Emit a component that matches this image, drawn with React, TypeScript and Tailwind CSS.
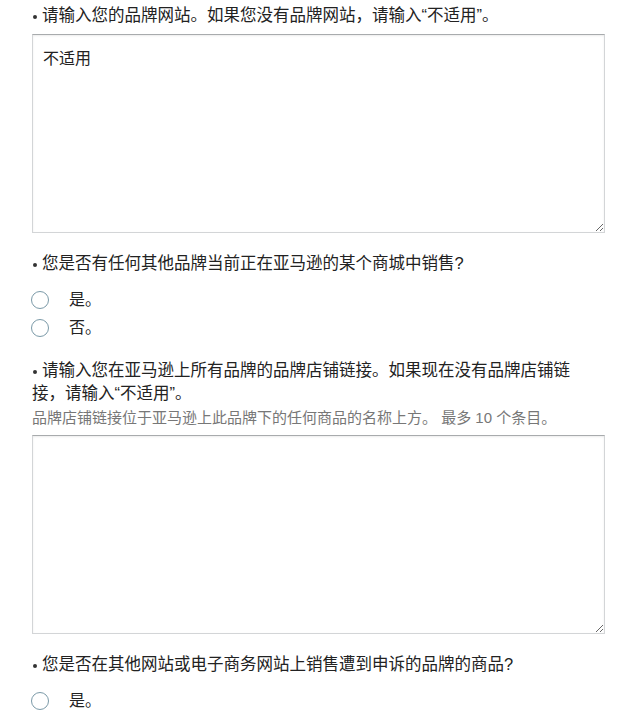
import React, { useState } from "react";

const font = { fontFamily: '"Liberation Sans", "Noto Sans CJK SC", sans-serif' };

const Question = ({ children }: { children: React.ReactNode }) => (
  <p className="text-[16.5px] leading-[23px] text-[#222] max-w-[550px]">
    <span className="inline-block w-[4px] h-[4px] rounded-full bg-[#333] align-middle ml-[1px] mr-[5px]" />
    {children}
  </p>
);

const Radio = ({ label, name }: { label: string; name: string }) => {
  return (
    <label className="flex items-center h-[28px] cursor-pointer">
      <span className="w-[18px] h-[18px] rounded-full border-[1.5px] border-[#7b9aa8] bg-white" />
      <span className="ml-[20px] text-[16px] text-[#222]">{label}</span>
      <input type="radio" name={name} className="hidden" />
    </label>
  );
};

const Area = ({ value }: { value?: string }) => {
  const [text, setText] = useState(value ?? "");
  return (
    <textarea
      value={text}
      onChange={(e) => setText(e.target.value)}
      className="block w-[573px] h-[199px] border border-[#d3d5d7] border-t-[#a8abad] shadow-[inset_0_1px_2px_rgba(0,0,0,0.08)] px-[10px] py-[12px] text-[16px] text-[#222] outline-none"
      style={font}
    />
  );
};

export default function App() {
  return (
    <div className="bg-white min-h-[710px] pl-[32px] pt-[4px]" style={font}>
      <Question>请输入您的品牌网站。如果您没有品牌网站，请输入“不适用”。</Question>
      <div className="mt-[7px]">
        <Area value="不适用" />
      </div>

      <div className="mt-[19px]">
        <Question>您是否有任何其他品牌当前正在亚马逊的某个商城中销售?</Question>
      </div>
      <div className="mt-[11px] -ml-[1px]">
        <Radio label="是。" name="q2" />
        <Radio label="否。" name="q2" />
      </div>

      <div className="mt-[17px]">
        <Question>请输入您在亚马逊上所有品牌的品牌店铺链接。如果现在没有品牌店铺链接，请输入“不适用”。</Question>
      </div>
      <p className="mt-[3px] text-[15px] leading-[20px] text-[#777]">
        品牌店铺链接位于亚马逊上此品牌下的任何商品的名称上方。 最多 10 个条目。
      </p>
      <div className="mt-[7px]">
        <Area />
      </div>

      <div className="mt-[19px]">
        <Question>您是否在其他网站或电子商务网站上销售遭到申诉的品牌的商品?</Question>
      </div>
      <div className="mt-[11px] -ml-[1px]">
        <Radio label="是。" name="q4" />
      </div>
    </div>
  );
}
